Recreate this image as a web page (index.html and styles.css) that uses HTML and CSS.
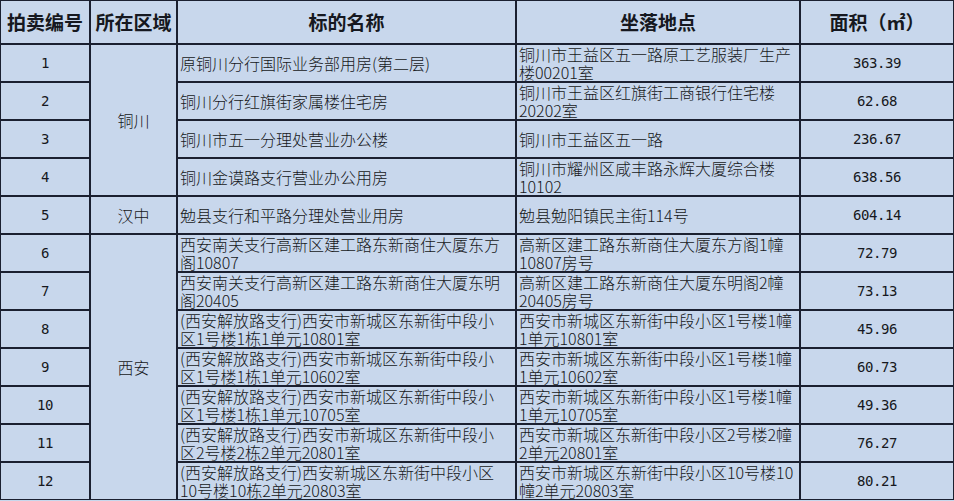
FILE: index.html
```html
<!DOCTYPE html>
<html lang="zh-CN">
<head>
<meta charset="utf-8">
<title>拍卖标的</title>
<link rel="stylesheet" href="styles.css">
</head>
<body>
<div class="sheet">
  <div class="cell th">拍卖编号</div>
  <div class="cell th">所在区域</div>
  <div class="cell th">标的名称</div>
  <div class="cell th">坐落地点</div>
  <div class="cell th">面积（㎡）</div>

  <div class="cell num">1</div>
  <div class="cell region span4">铜川</div>
  <div class="cell txt">原铜川分行国际业务部用房(第二层)</div>
  <div class="cell txt">铜川市王益区五一路原工艺服装厂生产<br>楼00201室</div>
  <div class="cell num">363.39</div>

  <div class="cell num">2</div>
  <div class="cell txt">铜川分行红旗街家属楼住宅房</div>
  <div class="cell txt">铜川市王益区红旗街工商银行住宅楼<br>20202室</div>
  <div class="cell num">62.68</div>

  <div class="cell num">3</div>
  <div class="cell txt">铜川市五一分理处营业办公楼</div>
  <div class="cell txt">铜川市王益区五一路</div>
  <div class="cell num">236.67</div>

  <div class="cell num">4</div>
  <div class="cell txt">铜川金谟路支行营业办公用房</div>
  <div class="cell txt">铜川市耀州区咸丰路永辉大厦综合楼<br>10102</div>
  <div class="cell num">638.56</div>

  <div class="cell num">5</div>
  <div class="cell region">汉中</div>
  <div class="cell txt">勉县支行和平路分理处营业用房</div>
  <div class="cell txt">勉县勉阳镇民主街114号</div>
  <div class="cell num">604.14</div>

  <div class="cell num">6</div>
  <div class="cell region span7">西安</div>
  <div class="cell txt">西安南关支行高新区建工路东新商住大厦东方<br>阁10807</div>
  <div class="cell txt">高新区建工路东新商住大厦东方阁1幢<br>10807房号</div>
  <div class="cell num">72.79</div>

  <div class="cell num">7</div>
  <div class="cell txt">西安南关支行高新区建工路东新商住大厦东明<br>阁20405</div>
  <div class="cell txt">高新区建工路东新商住大厦东明阁2幢<br>20405房号</div>
  <div class="cell num">73.13</div>

  <div class="cell num">8</div>
  <div class="cell txt">(西安解放路支行)西安市新城区东新街中段小<br>区1号楼1栋1单元10801室</div>
  <div class="cell txt">西安市新城区东新街中段小区1号楼1幢<br>1单元10801室</div>
  <div class="cell num">45.96</div>

  <div class="cell num">9</div>
  <div class="cell txt">(西安解放路支行)西安市新城区东新街中段小<br>区1号楼1栋1单元10602室</div>
  <div class="cell txt">西安市新城区东新街中段小区1号楼1幢<br>1单元10602室</div>
  <div class="cell num">60.73</div>

  <div class="cell num">10</div>
  <div class="cell txt">(西安解放路支行)西安市新城区东新街中段小<br>区1号楼1栋1单元10705室</div>
  <div class="cell txt">西安市新城区东新街中段小区1号楼1幢<br>1单元10705室</div>
  <div class="cell num">49.36</div>

  <div class="cell num">11</div>
  <div class="cell txt">(西安解放路支行)西安市新城区东新街中段小<br>区2号楼2栋2单元20801室</div>
  <div class="cell txt">西安市新城区东新街中段小区2号楼2幢<br>2单元20801室</div>
  <div class="cell num">76.27</div>

  <div class="cell num">12</div>
  <div class="cell txt">(西安解放路支行)西安新城区东新街中段小区<br>10号楼10栋2单元20803室</div>
  <div class="cell txt">西安市新城区东新街中段小区10号楼10<br>幢2单元20803室</div>
  <div class="cell num">80.21</div>
</div>
</body>
</html>
```

FILE: styles.css
```css
html, body {
  margin: 0;
  padding: 0;
  background: #c8d7ec;
}

.sheet {
  display: grid;
  grid-template-columns: 88px 85px 337px 282px 152px;
  grid-template-rows: 42px repeat(12, 36px);
  gap: 2px;
  padding: 1px;
  width: 954px;
  box-sizing: border-box;
  background: #1b2030;
  color: #161820;
  font-family: "Noto Sans CJK SC", "Noto Sans", sans-serif;
  font-size: 16px;
}

.cell {
  background: #c8d7ec;
  display: flex;
  align-items: center;
  white-space: nowrap;
  line-height: 18px;
  font-weight: 300;
}

.th {
  justify-content: center;
  font-size: 19px;
  font-weight: 700;
  line-height: 22px;
}

.num {
  justify-content: center;
  font-family: "DejaVu Sans Mono", "Liberation Mono", monospace;
  font-size: 14px;
  font-weight: 400;
  letter-spacing: -0.4px;
}

.region {
  justify-content: center;
}

.span4 {
  grid-row: span 4;
}

.span7 {
  grid-row: span 7;
}

.txt {
  justify-content: flex-start;
  padding-left: 2px;
}
```
